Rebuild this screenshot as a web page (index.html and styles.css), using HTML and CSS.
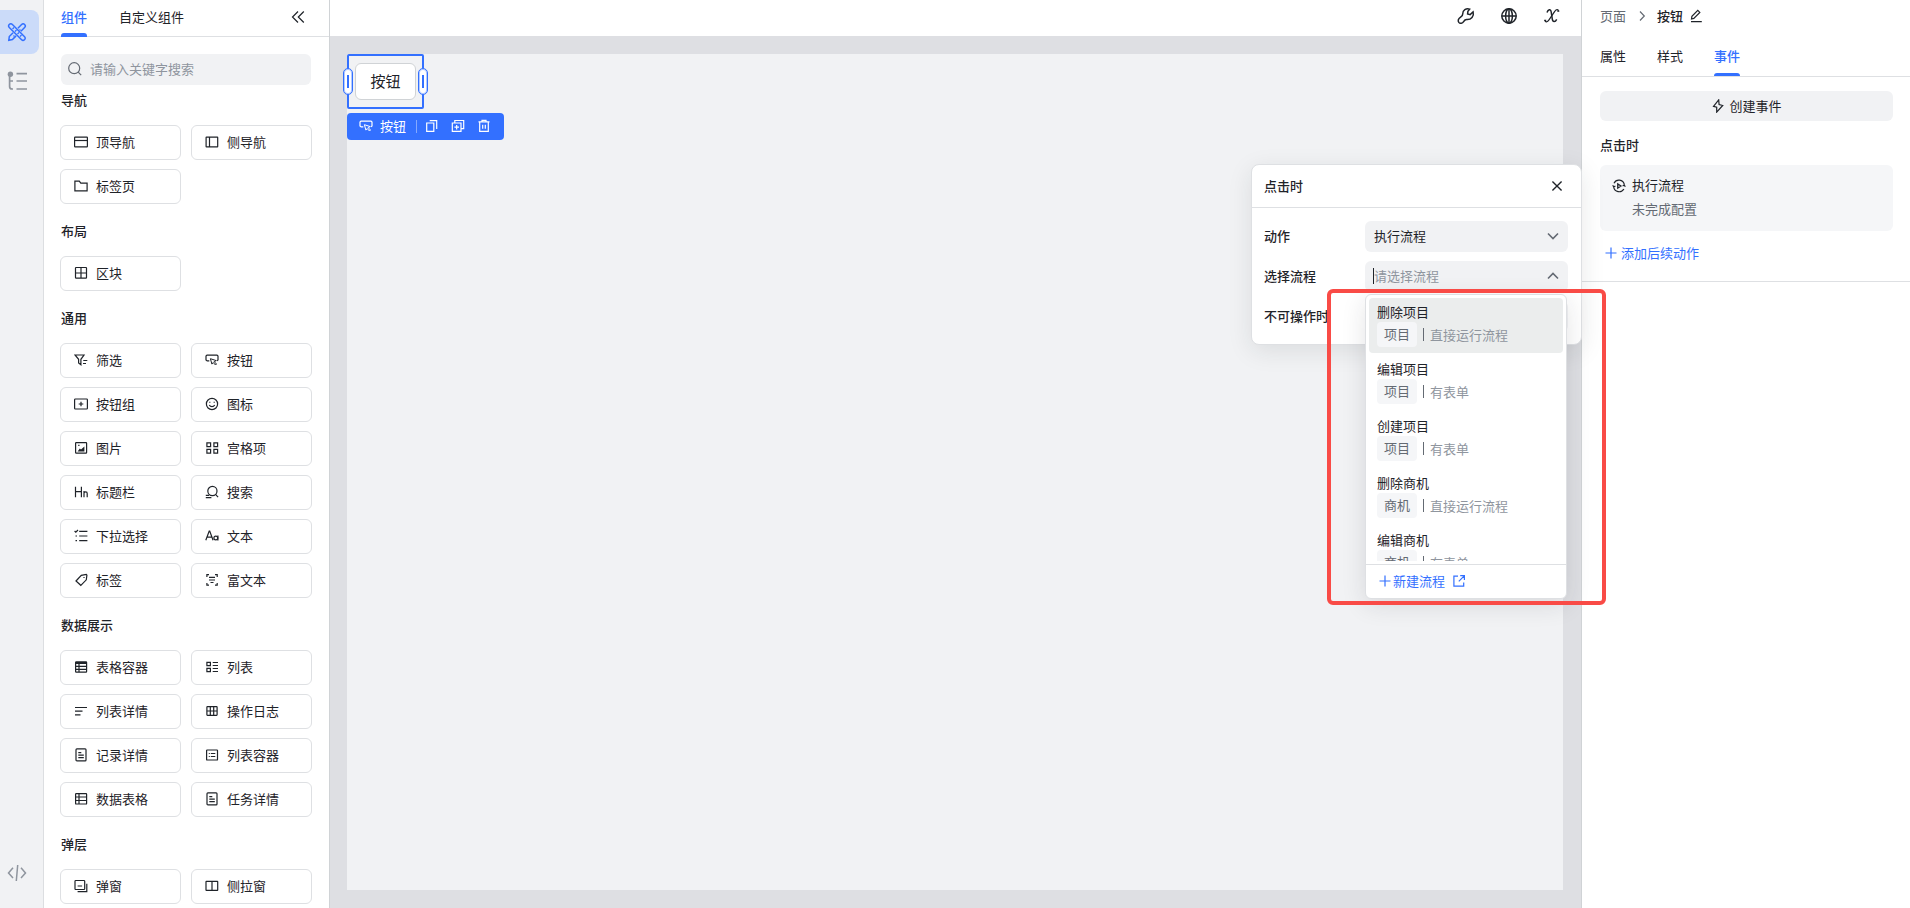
FILE: index.html
```html
<!DOCTYPE html>
<html lang="zh-CN">
<head>
<meta charset="utf-8">
<title>页面设计器</title>
<link rel="stylesheet" href="styles.css">
</head>
<body>
<svg class="sprite" aria-hidden="true">
  <symbol id="i-top" viewBox="0 0 14 14"><rect x=".6" y="2.1" width="12.8" height="9.8" rx=".6"/><path d="M.6 5.5h12.8"/></symbol>
  <symbol id="i-side" viewBox="0 0 14 14"><rect x="1.1" y="2.1" width="11.6" height="9.8" rx=".4"/><path d="M4.5 2v10"/></symbol>
  <symbol id="i-folder" viewBox="0 0 14 14"><path d="M.9 11.9V2.1h4.4l1.5 2h6.3v7.8z"/></symbol>
  <symbol id="i-block" viewBox="0 0 14 14"><rect x="1.5" y="1.5" width="11" height="10.6" rx=".6"/><path d="M7 1.5v10.6M1.5 7h11"/></symbol>
  <symbol id="i-filter" viewBox="0 0 14 14"><path d="M1 2h9L6.9 6.3v5.4L4.6 10V6.3zM9.3 7.5h4M9 10.5h3"/></symbol>
  <symbol id="i-button" viewBox="0 0 14 14"><path d="M4.300 7.900H2.200L1 6.900V3.100l1-1h10l1 1v3.800l-1.200 1"/><path stroke-width="1" d="M5.400 5.700l1.500 5.400 1.300-1.600 2.300 2.500 1-1-2.300-2.300 2-1.100z"/></symbol>
  <symbol id="i-group" viewBox="0 0 14 14"><rect x=".6" y="2" width="12.8" height="10" rx=".8"/><path d="M7 4.7v4.6M4.700 7h4.600"/></symbol>
  <symbol id="i-smile" viewBox="0 0 14 14"><circle cx="7" cy="7" r="5.6"/><path d="M4.8 4.8v1M9.2 4.8v1M4.3 8c1.2 2.2 4.2 2.2 5.4 0"/></symbol>
  <symbol id="i-image" viewBox="0 0 14 14"><rect x="1.6" y="1.6" width="11" height="10.6" rx=".6"/><path d="M3.6 10.6l2.2-3 1.2 1 3.4-3.2v5.2z" fill="currentColor" stroke="none"/><path d="M4.2 3.8h1.3v1.3H4.2z" fill="currentColor" stroke="none"/></symbol>
  <symbol id="i-grid" viewBox="0 0 14 14"><path d="M1.9 1.9h3.7v3.7H1.9zM8.900 1.900h3.700v3.700H8.900zM1.900 8.400h3.700v3.700H1.900zM8.900 8.400h3.700v3.700H8.900z"/></symbol>
  <symbol id="i-heading" viewBox="0 0 14 14"><path d="M1.5 1.8v10.4M7.4 1.8v10.4M1.5 6.6h5.9M10 6v6.2M10 8.2c.4-1.8 3.2-1.9 3.2.3v3.7"/></symbol>
  <symbol id="i-query" viewBox="0 0 14 14"><circle cx="7.4" cy="6" r="4.6"/><path d="M10.500 9.400l2.600 2.800M.8 10.400h3.400M.8 12.600h5.600"/></symbol>
  <symbol id="i-check" viewBox="0 0 14 14"><path d="M5.2 2.4h8.2M5.2 7h8.2M5.2 11.6h8.2M.6 2l1.2 1.2L4 1M1.5 7h1.5M1.5 11.6h1.5"/></symbol>
  <symbol id="i-text" viewBox="0 0 14 14"><path d="M.8 11.2L4.200 2h.500l3.400 9.200M2 8.200h5"/><circle cx="10.800" cy="9" r="1.900"/><path d="M12.900 6.500v4.900"/></symbol>
  <symbol id="i-tag" viewBox="0 0 14 14"><path d="M2 8l5.300-5.600 5-.9.6.6-.6 4.700-5.500 5.500z"/><path d="M10 4v1"/></symbol>
  <symbol id="i-rich" viewBox="0 0 14 14"><path d="M4 1.700H1.900V4M10 1.700h2.200V4M1.900 10v2.100H4M12.200 10v2.100H10M4 4.400h6M4 7h6M5.500 9.500h3"/></symbol>
  <symbol id="i-tablebox" viewBox="0 0 14 14"><rect x="1.600" y="1.800" width="11" height="10.400" rx=".6"/><path d="M1.600 3h11" stroke-width="2"/><path d="M1.600 6.300h11M1.600 9.300h11M5 2v10"/></symbol>
  <symbol id="i-list" viewBox="0 0 14 14"><path d="M1.900 2.400h3.500v3.300H1.900zM1.900 8.300h3.500v3.300H1.900zM7.700 2.500H13M7.700 5.500H13M7.700 8.500H13M7.700 11.500H13"/></symbol>
  <symbol id="i-lines" viewBox="0 0 14 14"><path d="M1 3.500h12M1 7.200h7.500M1 10.800h5.500"/></symbol>
  <symbol id="i-log" viewBox="0 0 14 14"><rect x="1.900" y="2.700" width="10.200" height="8.600" rx=".5"/><path d="M1.900 7h10.200M5.300 2.700v8.600M8.700 2.700v8.600"/></symbol>
  <symbol id="i-record" viewBox="0 0 14 14"><rect x="2" y=".9" width="10" height="12" rx=".9"/><path d="M4.300 4.700h3M4.300 7.200h5.500M4.300 9.700h5.500"/></symbol>
  <symbol id="i-listbox" viewBox="0 0 14 14"><rect x="1.600" y="2" width="10.900" height="10" rx=".6"/><path d="M3.800 5.500h1M3.800 8.500h1M5.800 5.500h4.500M5.800 8.500h4.500"/></symbol>
  <symbol id="i-data" viewBox="0 0 14 14"><rect x="1.600" y="1.600" width="11" height="10.400" rx=".6"/><path d="M1.600 5h11M1.600 8.500h11M5 1.600V12"/></symbol>
  <symbol id="i-popup" viewBox="0 0 14 14"><rect x="1" y="1.500" width="9.700" height="9" rx=".8"/><path d="M3.600 7h4.500M3.600 12.700h9.200V4.800"/></symbol>
  <symbol id="i-drawer" viewBox="0 0 14 14"><rect x="1" y="2.400" width="11.700" height="9" rx=".4"/><path d="M7 2.400v9"/></symbol>
  <symbol id="i-search" viewBox="0 0 14 14"><circle cx="6.200" cy="6.200" r="5.500"/><path d="M10.200 10.200l3 3"/></symbol>
  <symbol id="i-collapse" viewBox="0 0 14 14"><path d="M7 1.500L1.500 7 7 12.500M12.800 1.500L7.300 7l5.500 5.500"/></symbol>
  <symbol id="i-down" viewBox="0 0 14 14"><path d="M2 4.500l5 5 5-5"/></symbol>
  <symbol id="i-up" viewBox="0 0 14 14"><path d="M2 9.500l5-5 5 5"/></symbol>
  <symbol id="i-right" viewBox="0 0 14 14"><path d="M5 2.500L9.300 7 5 11.500"/></symbol>
  <symbol id="i-close" viewBox="0 0 14 14"><path d="M3 3l8 8M11 3l-8 8"/></symbol>
  <symbol id="i-plus" viewBox="0 0 14 14"><path d="M7 1.500v11M1.500 7h11"/></symbol>
  <symbol id="i-bolt" viewBox="0 0 14 14"><path d="M7.700.9L2.500 7.300l3.200.9v4.900l6-6.600-3.600-.9z"/></symbol>
  <symbol id="i-pencil" viewBox="0 0 14 14"><path d="M2 12.700h10.800M2.500 10l.4-2.700L8.800 1.400l2 2-6 6z"/></symbol>
  <symbol id="i-copy" viewBox="0 0 14 14"><path d="M1.700 4h7.100v8.400H1.700zM4.700 1.600h7v8.300"/></symbol>
  <symbol id="i-dup" viewBox="0 0 14 14"><path d="M1.300 4h8.700v8.300H1.300zM3.800 4V1.500h8.900v8.200H10M5.650 5.900v4.600M3.400 8.200h4.600"/></symbol>
  <symbol id="i-trash" viewBox="0 0 14 14"><path d="M1.500 2.900h11M5 2.500V1.300h4v1.200M2.700 3v9.300h8.600V3M5.700 5.700v4M8.300 5.700v4"/></symbol>
  <symbol id="i-external" viewBox="0 0 14 14"><path d="M6 2.200H1.900v10h9.800V8.500M8.200 1.700h4.200v4.200M12.200 1.900L6.800 7.300"/></symbol>
  <symbol id="i-run" viewBox="0 0 14 14"><path d="M2 4.200a5.500 5.500 0 0 1 10.300 1.300M.7 6.300l1 1.600 1.700-1M1.700 8a5.500 5.500 0 0 0 10.200 2M13.300 7.700l-1-1.600-1.700 1M5.700 4.900v4.200L9 7z"/></symbol>
  <symbol id="i-design" viewBox="0 0 20 20"><path d="M2.200 2.600c1-1.100 2.300-1 3.200-.1L17.600 14.700c.9.900.8 2.200-.1 3s-2 .9-2.900 0L2.300 5.500c-.9-.9-.8-2.100-.1-2.900z"/><path d="M10.900 6.200l3.700-3.700c.9-.9 2.100-.9 3 0s.9 2.100 0 3l-3.700 3.700M9.100 13.900l-3.700 3.700-3.600.7.500-3.800L6.100 10.800"/><path stroke-width="1.200" d="M5.500 7l1.500-1.500M8 9.500L9.500 8M10.500 12l1.500-1.500M13 14.500l1.500-1.500M12.500 7.500l1 1M6.500 13.500l1 1"/></symbol>
  <symbol id="i-tree" viewBox="0 0 20 20"><circle cx="3.400" cy="3.200" r="2.700" fill="currentColor" stroke="none"/><path stroke-width="1.700" d="M2.600 3v12.500a2.500 2.500 0 0 0 2.500 2.500H6M2.600 10H6M9.500 2.600H20M9.500 10H20M9.500 18H20"/></symbol>
  <symbol id="i-code" viewBox="0 0 20 20"><path d="M6 4.800L1.500 10 6 15M14 4.800l4.500 5.200-4.500 5M10.700 2L9.300 18"/></symbol>
  <symbol id="i-wrench" viewBox="0 0 18 18"><path d="M12.700 2.100C9.300.7 5.500 3.200 5.700 7c.1 1.500-.9 2.400-2.100 3.200-2.500 1.600-2.900 3.700-1.800 5.200 1.300 1.600 3.700 1 4.800-.8.900-1.500 1.900-2.100 3.300-2 4.200.3 7.400-3.500 6.200-7.800l-2.900 2.800-2.600-.7.300-2.600z"/></symbol>
  <symbol id="i-globe" viewBox="0 0 18 18"><circle cx="9" cy="9" r="7.200"/><ellipse cx="9" cy="9" rx="3.400" ry="7.200"/><path d="M1.800 9h14.400M9 1.800v14.400"/></symbol>
  <symbol id="i-var" viewBox="0 0 18 18"><path d="M4 5.500C5 2.500 7.800 1.600 8.200 5l1.100 7.200c.5 3.500 3 2.900 4.400.1"/><path stroke-width="1.200" d="M15.400 4.300c0-2.100-2.100-2.300-3.500-.1L6 12.900c-1.600 2.500-3.900 2.400-4 .6"/><path stroke-width="2" d="M15.300 3.500v1.200M2.200 12.700v1.300"/></symbol>
</svg>

<div class="app">
  <nav class="rail" aria-label="工具">
    <button class="rail-item active" aria-label="组件"><svg class="ic20"><use href="#i-design"/></svg></button>
    <button class="rail-item" aria-label="大纲"><svg class="ic20"><use href="#i-tree"/></svg></button>
    <button class="rail-item bottom" aria-label="代码"><svg class="ic20"><use href="#i-code"/></svg></button>
  </nav>

  <aside class="library">
    <header class="lib-head">
      <button class="tab active">组件</button>
      <button class="tab">自定义组件</button>
      <button class="collapse" aria-label="收起"><svg class="ic14"><use href="#i-collapse"/></svg></button>
    </header>
    <div class="lib-body">
      <label class="search"><svg class="ic14"><use href="#i-search"/></svg><input type="text" placeholder="请输入关键字搜索" aria-label="搜索组件"></label>

      <h2>导航</h2>
      <div class="grid">
        <button class="card"><svg class="ic14"><use href="#i-top"/></svg>顶导航</button>
        <button class="card"><svg class="ic14"><use href="#i-side"/></svg>侧导航</button>
        <button class="card"><svg class="ic14"><use href="#i-folder"/></svg>标签页</button>
      </div>
      <h2>布局</h2>
      <div class="grid">
        <button class="card"><svg class="ic14"><use href="#i-block"/></svg>区块</button>
      </div>
      <h2>通用</h2>
      <div class="grid">
        <button class="card"><svg class="ic14"><use href="#i-filter"/></svg>筛选</button>
        <button class="card"><svg class="ic14"><use href="#i-button"/></svg>按钮</button>
        <button class="card"><svg class="ic14"><use href="#i-group"/></svg>按钮组</button>
        <button class="card"><svg class="ic14"><use href="#i-smile"/></svg>图标</button>
        <button class="card"><svg class="ic14"><use href="#i-image"/></svg>图片</button>
        <button class="card"><svg class="ic14"><use href="#i-grid"/></svg>宫格项</button>
        <button class="card"><svg class="ic14"><use href="#i-heading"/></svg>标题栏</button>
        <button class="card"><svg class="ic14"><use href="#i-query"/></svg>搜索</button>
        <button class="card"><svg class="ic14"><use href="#i-check"/></svg>下拉选择</button>
        <button class="card"><svg class="ic14"><use href="#i-text"/></svg>文本</button>
        <button class="card"><svg class="ic14"><use href="#i-tag"/></svg>标签</button>
        <button class="card"><svg class="ic14"><use href="#i-rich"/></svg>富文本</button>
      </div>
      <h2>数据展示</h2>
      <div class="grid">
        <button class="card"><svg class="ic14"><use href="#i-tablebox"/></svg>表格容器</button>
        <button class="card"><svg class="ic14"><use href="#i-list"/></svg>列表</button>
        <button class="card"><svg class="ic14"><use href="#i-lines"/></svg>列表详情</button>
        <button class="card"><svg class="ic14"><use href="#i-log"/></svg>操作日志</button>
        <button class="card"><svg class="ic14"><use href="#i-record"/></svg>记录详情</button>
        <button class="card"><svg class="ic14"><use href="#i-listbox"/></svg>列表容器</button>
        <button class="card"><svg class="ic14"><use href="#i-data"/></svg>数据表格</button>
        <button class="card"><svg class="ic14"><use href="#i-record"/></svg>任务详情</button>
      </div>
      <h2>弹层</h2>
      <div class="grid">
        <button class="card"><svg class="ic14"><use href="#i-popup"/></svg>弹窗</button>
        <button class="card"><svg class="ic14"><use href="#i-drawer"/></svg>侧拉窗</button>
      </div>
    </div>
  </aside>

  <main class="stage">
    <header class="stage-head">
      <button aria-label="工具"><svg class="ic18"><use href="#i-wrench"/></svg></button>
      <button aria-label="语言"><svg class="ic18"><use href="#i-globe"/></svg></button>
      <button aria-label="变量"><svg class="ic18"><use href="#i-var"/></svg></button>
    </header>
    <div class="stage-body">
      <div class="canvas">
        <div class="selected">
          <span class="handle left"></span>
          <button class="demo-btn">按钮</button>
          <span class="handle right"></span>
        </div>
        <div class="toolbar">
          <svg class="ic14"><use href="#i-button"/></svg>
          <span class="toolbar-name">按钮</span>
          <span class="toolbar-line"></span>
          <button aria-label="复制"><svg class="ic14"><use href="#i-copy"/></svg></button>
          <button aria-label="创建副本"><svg class="ic14"><use href="#i-dup"/></svg></button>
          <button aria-label="删除"><svg class="ic14"><use href="#i-trash"/></svg></button>
        </div>
      </div>
    </div>

    <section class="dialog" role="dialog" aria-labelledby="dialog-title">
      <header class="dialog-head">
        <h3 id="dialog-title">点击时</h3>
        <button aria-label="关闭"><svg class="ic16"><use href="#i-close"/></svg></button>
      </header>
      <div class="dialog-body">
        <div class="field">
          <label for="action">动作</label>
          <div class="control"><select id="action"><option>执行流程</option></select><svg class="ic14"><use href="#i-down"/></svg></div>
        </div>
        <div class="field">
          <label for="flow">选择流程</label>
          <div class="control">
            <input id="flow" type="text" placeholder="请选择流程" role="combobox" aria-expanded="true">
            <span class="caret"></span>
            <svg class="ic14"><use href="#i-up"/></svg>
            <div class="dropdown">
              <ul class="options" role="listbox" aria-label="流程">
                <li class="option hover" role="option"><span>删除项目</span><div class="meta"><span class="chip">项目</span><i></i>直接运行流程</div></li>
                <li class="option" role="option"><span>编辑项目</span><div class="meta"><span class="chip">项目</span><i></i>有表单</div></li>
                <li class="option" role="option"><span>创建项目</span><div class="meta"><span class="chip">项目</span><i></i>有表单</div></li>
                <li class="option" role="option"><span>删除商机</span><div class="meta"><span class="chip">商机</span><i></i>直接运行流程</div></li>
                <li class="option" role="option"><span>编辑商机</span><div class="meta"><span class="chip">商机</span><i></i>有表单</div></li>
              </ul>
              <a class="new-flow" href="#"><svg class="ic14"><use href="#i-plus"/></svg><span>新建流程</span><svg class="ic14"><use href="#i-external"/></svg></a>
            </div>
            <div class="marker"></div>
          </div>
        </div>
        <div class="field">
          <label for="disabled">不可操作时</label>
          <div class="control"><select id="disabled"><option></option></select></div>
        </div>
      </div>
    </section>
  </main>

  <aside class="inspector">
    <nav class="crumbs" aria-label="面包屑">
      <a href="#">页面</a>
      <svg class="ic14"><use href="#i-right"/></svg>
      <strong>按钮</strong>
      <button aria-label="重命名"><svg class="ic14"><use href="#i-pencil"/></svg></button>
    </nav>
    <div class="ins-tabs">
      <button class="tab">属性</button>
      <button class="tab">样式</button>
      <button class="tab active">事件</button>
    </div>
    <div class="ins-body">
      <button class="create"><svg class="ic14"><use href="#i-bolt"/></svg>创建事件</button>
      <h2>点击时</h2>
      <div class="event">
        <svg class="ic14"><use href="#i-run"/></svg>
        <div><p>执行流程</p><p class="muted">未完成配置</p></div>
      </div>
      <button class="add"><svg class="ic14"><use href="#i-plus"/></svg>添加后续动作</button>
    </div>
  </aside>
</div>
</body>
</html>
```

FILE: styles.css
```css
* { box-sizing: border-box; }

body {
  margin: 0;
  font: 13px/20px "Noto Sans CJK SC", sans-serif;
  color: #1f2329;
  background: #fff;
}

button, input, select {
  font: inherit;
  color: inherit;
  border: 0;
  padding: 0;
  margin: 0;
  background: none;
  outline: none;
}

button { display: inline-flex; align-items: center; justify-content: center; cursor: pointer; }
a { color: inherit; text-decoration: none; }
h2, h3, p, ul { margin: 0; padding: 0; }
h2, h3 { font-size: 13px; line-height: 20px; font-weight: 500; }

svg { fill: none; stroke: currentColor; stroke-width: 1.2; flex: none; display: block; }
.sprite { position: absolute; width: 0; height: 0; }
.ic14 { width: 14px; height: 14px; }
.ic16 { width: 16px; height: 16px; }
.ic18 { width: 18px; height: 18px; stroke-width: 1.5; }
.ic20 { width: 20px; height: 20px; stroke-width: 1.5; }

.app { display: flex; height: 100vh; overflow: hidden; }

/* Left rail */
.rail {
  width: 44px;
  flex: none;
  display: flex;
  flex-direction: column;
  gap: 5px;
  padding: 10px 0;
  background: #f1f2f4;
  border-right: 1px solid #dcdee1;
}
.rail-item { width: 39px; height: 44px; padding-right: 5px; color: #8f959e; }
.rail-item.active { background: #cbdbf9; color: #3370ff; border-radius: 0 8px 8px 0; }
.rail-item.bottom { margin-top: auto; margin-bottom: 3px; }

/* Component library */
.library {
  width: 286px;
  flex: none;
  display: flex;
  flex-direction: column;
  border-right: 1px solid #d0d3d6;
}
.lib-head {
  display: flex;
  height: 37px;
  flex: none;
  gap: 32px;
  padding: 0 17px;
  border-bottom: 1px solid #dee0e3;
}
.tab { position: relative; padding-bottom: 2px; }
.tab.active { color: #3370ff; font-weight: 500; }
.tab.active::after {
  content: "";
  position: absolute;
  left: 0;
  right: 0;
  bottom: -1px;
  height: 4px;
  border-radius: 3px 3px 0 0;
  background: #3370ff;
}
.collapse { margin-left: auto; padding: 0 7px 2px 0; }
.lib-body { flex: 1; overflow: hidden; padding: 17px 17px 0 16px; }
.search {
  display: flex;
  align-items: center;
  gap: 8px;
  height: 31px;
  margin: 0 1px 5px;
  padding: 0 7px 1px;
  border-radius: 6px;
  background: #f1f2f4;
  color: #646a73;
}
.search input { flex: 1; min-width: 0; }
::placeholder { color: #8f959e; opacity: 1; }
.lib-body h2 { margin: 17px 1px 15px; }
.search + h2 { margin-top: 0; }
.grid { display: grid; grid-template-columns: 1fr 1fr; gap: 9px 10px; }
.card {
  justify-content: flex-start;
  gap: 8px;
  height: 35px;
  padding: 0 0 2px 13px;
  border: 1px solid #dee0e3;
  border-radius: 6px;
  background: #fff;
}

/* Stage */
.stage { position: relative; z-index: 1; flex: 1; min-width: 0; display: flex; flex-direction: column; }
.stage-head {
  display: flex;
  justify-content: flex-end;
  align-items: center;
  gap: 25px;
  height: 36px;
  flex: none;
  padding: 0 20px 4px;
  background: #fff;
}
.stage-body { flex: 1; padding: 18px 18px 18px 17px; background: #dedfe3; }
.canvas { height: 100%; background: #f1f2f4; }
.selected {
  position: relative;
  display: flex;
  align-items: center;
  justify-content: center;
  width: 77px;
  height: 55px;
  border: 2px solid #3370ff;
  border-radius: 2px;
}
.demo-btn {
  height: 37px;
  padding: 0 14px 2px;
  font-size: 15px;
  border: 1px solid #d0d3d6;
  border-radius: 6px;
  background: #fff;
}
.handle {
  position: absolute;
  top: 12px;
  width: 10px;
  height: 27px;
  padding: 6px 2px;
  border: 1px solid #3370ff;
  border-radius: 5px;
  background: #fff;
  box-shadow: inset 0 0 0 1px #b3caff;
}
.handle::after { content: ""; display: block; width: 2px; height: 13px; margin: 0 1px; background: #3370ff; }
.handle.left { left: -6px; }
.handle.right { right: -6px; }
.toolbar {
  display: inline-flex;
  align-items: center;
  height: 27px;
  margin-top: 4px;
  padding: 0 13px 1px 12px;
  border-radius: 4px;
  background: #3370ff;
  color: #fff;
}
.toolbar-name { margin: 0 10px 0 7px; }
.toolbar-line { width: 1px; height: 13px; margin-right: 8px; background: #85a9ff; }
.toolbar button + button { margin-left: 12px; }

/* Event dialog */
.dialog {
  position: absolute;
  top: 164px;
  right: -1px;
  width: 331px;
  border: 1px solid #dee0e3;
  border-radius: 8px;
  background: #fff;
  box-shadow: 0 6px 24px rgba(31, 35, 41, .1);
}
.dialog-head {
  display: flex;
  align-items: center;
  justify-content: space-between;
  height: 43px;
  padding: 0 16px 1px 12px;
  border-bottom: 1px solid #dee0e3;
}
.dialog-body { display: grid; gap: 9px; padding: 13px 13px 12px 12px; }
.field { display: flex; align-items: center; font-weight: 500; }
.field label { width: 101px; flex: none; padding-bottom: 2px; }
.control { position: relative; flex: 1; height: 31px; font-weight: 400; }
.control select, .control input {
  appearance: none;
  width: 100%;
  height: 100%;
  padding: 0 32px 2px 9px;
  border-radius: 6px;
  background: #f1f2f4;
}
.control > svg { position: absolute; right: 8px; top: 8px; color: #646a73; stroke-width: 1.6; }
.caret { position: absolute; left: 8px; top: 7px; width: 1px; height: 16px; background: #1f2329; }

.dropdown {
  position: absolute;
  z-index: 2;
  top: 33px;
  left: 0;
  right: 1px;
  border: 1px solid #dee0e3;
  border-radius: 6px;
  background: #fff;
  box-shadow: 0 6px 24px rgba(31, 35, 41, .12);
}
.options { height: 263px; margin: 3px 3px 3px; overflow: hidden; list-style: none; }
.option { height: 55px; margin-bottom: 2px; padding: 4px 8px 0; border-radius: 4px; }
.option.hover { background: #ebeded; }
.option > span { display: block; }
.meta { display: flex; align-items: center; color: #8f959e; }
.chip { padding: 2px 7px 3px; border-radius: 4px; background: #f5f6f8; color: #646a73; }
.meta i { width: 1px; height: 13px; margin: 0 6px; background: #646a73; }
.new-flow {
  display: flex;
  align-items: center;
  height: 34px;
  padding: 0 0 1px 12px;
  border-top: 1px solid #dee0e3;
  color: #3370ff;
}
.new-flow span { margin: 0 7px 0 1px; }
.marker {
  position: absolute;
  z-index: 3;
  top: 28px;
  left: -38px;
  right: -38px;
  height: 316px;
  border: 4px solid #f94b46;
  border-radius: 6px;
  pointer-events: none;
}

/* Inspector */
.inspector { width: 329px; flex: none; border-left: 1px solid #d0d3d6; }
.crumbs { display: flex; align-items: center; height: 32px; padding: 0 18px; color: #1f2329; }
.crumbs a, .crumbs > svg { color: #646a73; }
.crumbs > svg { margin: 0 8px 0 9px; }
.crumbs strong { font-weight: 500; margin-right: 6px; }
.ins-tabs { display: flex; gap: 31px; height: 45px; padding: 5px 18px 0; border-bottom: 1px solid #dee0e3; }
.ins-tabs .tab.active::after { bottom: 0; height: 3px; }
.ins-body { display: flex; flex-direction: column; padding: 14px 17px 18px 18px; border-bottom: 1px solid #dee0e3; }
.create { gap: 4px; height: 30px; padding-bottom: 1px; border-radius: 6px; background: #f1f2f4; }
.ins-body h2 { margin: 14px 0 10px; }
.event { display: flex; gap: 6px; height: 66px; padding: 10px 12px; border-radius: 6px; background: #f5f6f8; }
.event > svg { margin-top: 4px; }
.event p + p { margin-top: 4px; }
.muted { color: #646a73; }
.add { align-self: flex-start; gap: 3px; margin: 12px 0 0 4px; color: #3370ff; }
```
